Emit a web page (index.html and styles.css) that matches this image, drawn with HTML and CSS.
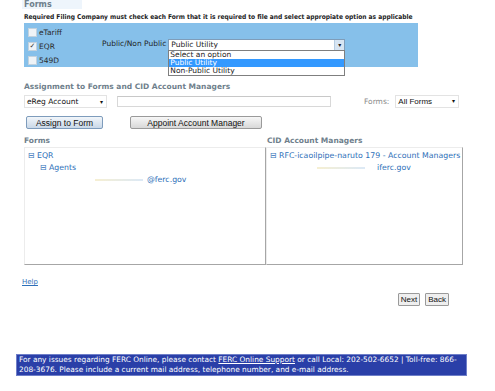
FILE: index.html
```html
<!DOCTYPE html>
<html lang="en">
<head>
  <meta charset="UTF-8">
  <title>Forms Assignment</title>
  <link rel="stylesheet" href="styles.css">
</head>
<body>

  <div class="page">
    <h3 class="sectionTitle topTitle">Forms</h3>
    <p class="note">Required Filing Company must check each Form that it is required to file and select appropiate option as applicable</p>

    <div class="formPanel">
      <div class="checks">
        <label class="check"><span class="box"></span>eTariff</label>
        <label class="check"><span class="box checked">&#10003;</span>EQR</label>
        <label class="check"><span class="box"></span>549D</label>
      </div>
      <div class="utility">
        <span class="utilityLabel">Public/Non Public</span>
        <div class="combo">
          <div class="comboValue">Public Utility<span class="comboArrow">&#9662;</span></div>
          <ul class="comboList">
            <li>Select an option</li>
            <li class="active">Public Utility</li>
            <li>Non-Public Utility</li>
          </ul>
        </div>
      </div>
    </div>

    <h3 class="sectionTitle assignTitle">Assignment to Forms and CID Account Managers</h3>

    <div class="filterRow">
      <div class="plainSelect account">eReg Account<span>&#9662;</span></div>
      <div class="searchBox"></div>
      <span class="formsLabel">Forms:</span>
      <div class="plainSelect allForms">All Forms<span>&#9662;</span></div>
    </div>

    <div class="actionRow">
      <button class="actionButton assign">Assign to Form</button>
      <button class="actionButton appoint">Appoint Account Manager</button>
    </div>

    <div class="trees">
      <div class="treeColumn left">
        <h3 class="sectionTitle">Forms</h3>
        <div class="treeBox">
          <div class="node">&#8863; EQR</div>
          <div class="node level2">&#8863; Agents</div>
          <div class="node email"><span class="redacted"></span>@ferc.gov</div>
        </div>
      </div>
      <div class="treeColumn right">
        <h3 class="sectionTitle">CID Account Managers</h3>
        <div class="treeBox">
          <div class="node">&#8863; RFC-icaoilpipe-naruto 179 - Account Managers</div>
          <div class="node email2"><span class="redacted short"></span>iferc.gov</div>
        </div>
      </div>
    </div>

    <a class="help" href="#">Help</a>

    <div class="navRow">
      <button class="navButton">Next</button>
      <button class="navButton">Back</button>
    </div>
  </div>

  <div class="footer">
    For any issues regarding FERC Online, please contact <a href="#">FERC Online Support</a> or call Local: 202-502-6652 | Toll-free: 866-208-3676. Please include a current mail address, telephone number, and e-mail address.
  </div>

</body>
</html>
```

FILE: styles.css
```css
body {
  margin: 0;
  font-family: "DejaVu Sans", Verdana, sans-serif;
  background: #fff;
  color: #222;
}

.page {
  padding-left: 24px;
  width: 440px;
}

.sectionTitle {
  margin: 0;
  font-size: 7.5px;
  font-weight: bold;
  color: #6f7f8c;
  line-height: 10px;
}

.topTitle {
  margin-left: -2px;
  padding-left: 2px;
  width: 58px;
  height: 9px;
  line-height: 9px;
  font-size: 8px;
  background: #eef5fc;
}

.note {
  margin: 4px 0 2px;
  font-family: "DejaVu Sans Condensed", "DejaVu Sans", sans-serif;
  font-size: 6.6px;
  font-weight: bold;
  color: #1d1d1d;
  line-height: 8px;
  white-space: nowrap;
}

.formPanel {
  width: 394px;
  height: 44px;
  background: #86c0ea;
  display: flex;
  position: relative;
}

.checks {
  display: flex;
  flex-direction: column;
  padding: 5px 0 0 4px;
  gap: 5px;
  width: 74px;
}

.check {
  display: flex;
  align-items: center;
  font-size: 7.5px;
  color: #2a2a2a;
  line-height: 9px;
}

.box {
  width: 7px;
  height: 7px;
  margin-right: 2px;
  background: #eef3f7;
  border: 1px solid #c2d2de;
  font-size: 7px;
  line-height: 7px;
  color: #333;
  text-align: center;
}

.utility {
  display: flex;
  align-items: flex-start;
  padding-top: 16px;
}

.utilityLabel {
  font-size: 7.5px;
  color: #1f1f1f;
  line-height: 10px;
  margin-right: 2px;
}

.combo {
  width: 177px;
  position: relative;
}

.comboValue {
  height: 10px;
  background: #fff;
  border: 1px solid #7f9db9;
  font-size: 7.5px;
  line-height: 10px;
  padding-left: 2px;
  position: relative;
}

.comboArrow {
  position: absolute;
  right: 0;
  top: 0;
  width: 9px;
  height: 10px;
  background: #d7e5f3;
  border-left: 1px solid #b7cde2;
  font-size: 6px;
  text-align: center;
  color: #222;
}

.comboList {
  position: absolute;
  left: 0;
  top: 11px;
  width: 175px;
  margin: 0;
  padding: 0;
  list-style: none;
  background: #fff;
  border: 1px solid #7f7f7f;
  font-size: 7.5px;
  line-height: 8px;
  z-index: 2;
}

.comboList li {
  padding-left: 1px;
}

.comboList .active {
  background: #3399ff;
  color: #fff;
}

.assignTitle {
  margin-top: 15px;
}

.filterRow {
  display: flex;
  align-items: center;
  height: 12px;
  margin-top: 3px;
}

.plainSelect {
  position: relative;
  height: 11px;
  border: 1px solid #e3e3e3;
  background: #fff;
  font-size: 7.5px;
  line-height: 11px;
  padding-left: 2px;
  color: #111;
}

.plainSelect span {
  position: absolute;
  right: 3px;
  top: 0;
  font-size: 6px;
}

.account {
  width: 79px;
}

.searchBox {
  width: 212px;
  height: 9px;
  margin-left: 10px;
  border: 1px solid #d8d8d8;
  border-top-color: #c8c8c8;
}

.formsLabel {
  margin-left: 33px;
  font-size: 7.5px;
  color: #8a8a8a;
}

.allForms {
  margin-left: 6px;
  width: 60px;
  font-family: "Liberation Sans", Arial, sans-serif;
  font-size: 8px;
}

.actionRow {
  display: flex;
  margin-top: 9px;
  height: 13px;
}

.actionButton {
  height: 13px;
  padding: 0;
  font-family: "Liberation Sans", Arial, sans-serif;
  font-size: 8.5px;
  color: #111;
  border-radius: 2px;
  cursor: pointer;
}

.assign {
  margin-left: 2px;
  width: 77px;
  border: 1px solid #7e9cbc;
  background: linear-gradient(#f2f6fa, #c9d8e8);
}

.appoint {
  margin-left: 27px;
  width: 132px;
  border: 1px solid #9a9a9a;
  background: linear-gradient(#f7f7f7, #d8d8d8);
}

.trees {
  display: flex;
  margin-top: 8px;
}

.treeColumn .sectionTitle {
  height: 8px;
  line-height: 8px;
}

.left {
  width: 242px;
}

.right {
  width: 197px;
}

.right .sectionTitle {
  padding-left: 1px;
}

.treeBox {
  height: 114px;
  margin-top: 2px;
  border: 1px solid #ececec;
  border-right: 1px solid #a6a6a6;
  border-bottom: 1px solid #a6a6a6;
  padding-top: 2px;
  font-size: 7.8px;
  color: #2d6fb8;
}

.node {
  line-height: 12px;
  padding-left: 3px;
  white-space: nowrap;
}

.level2 {
  padding-left: 15px;
}

.email {
  padding-left: 70px;
}

.email2 {
  padding-left: 50px;
}

.redacted {
  display: inline-block;
  width: 48px;
  height: 2px;
  margin-right: 4px;
  background: linear-gradient(90deg, #f6efd2, #dce9f6);
  vertical-align: middle;
}

.redacted.short {
  width: 48px;
  margin-right: 12px;
}

.help {
  display: block;
  margin-top: 13px;
  margin-left: -2px;
  font-size: 7px;
  color: #2d6fb8;
  line-height: 8px;
}

.navRow {
  display: flex;
  justify-content: flex-end;
  gap: 5px;
  margin-top: 7px;
  padding-right: 15px;
}

.navButton {
  height: 13px;
  padding: 0 2px;
  font-family: "Liberation Sans", Arial, sans-serif;
  font-size: 8px;
  color: #111;
  background: #efefef;
  border: 1px solid #9a9a9a;
  border-radius: 1px;
}

.footer {
  margin: 48px 0 0 16px;
  width: 445px;
  padding: 0 2px;
  background: #2a3fa8;
  border: 1px solid #6f7fc8;
  color: #fff;
  font-size: 7.4px;
  line-height: 10px;
}

.footer a {
  color: #fff;
}
```
